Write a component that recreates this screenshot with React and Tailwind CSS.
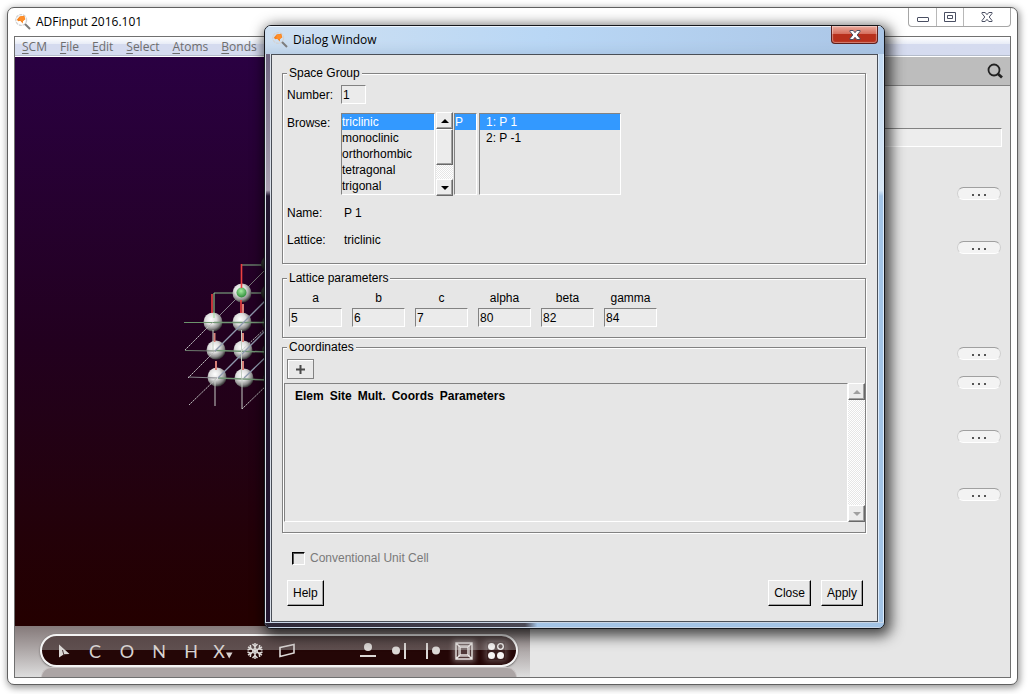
import React, { useState } from 'react';

const menus = ['SCM', 'File', 'Edit', 'Select', 'Atoms', 'Bonds'];

const systems = ['triclinic', 'monoclinic', 'orthorhombic', 'tetragonal', 'trigonal'];

const lattice = [
    { name: 'a', value: '5' },
    { name: 'b', value: '6' },
    { name: 'c', value: '7' },
    { name: 'alpha', value: '80' },
    { name: 'beta', value: '82' },
    { name: 'gamma', value: '84' },
];

const columns = ['Elem', 'Site', 'Mult.', 'Coords', 'Parameters'];

// space above each "more" button in the side panel
const moreButtons = ['mt-[40px]', 'mt-[41px]', 'mt-[93px]', 'mt-[16px]', 'mt-[41px]', 'mt-[45px]'];

const atoms = [
    [241, 293], [212, 322], [241, 322], [215, 350], [242, 350], [216, 377], [243, 378],
];

const darkAtoms = [[269, 264], [269, 293], [270, 323], [270, 351], [271, 379]];

function AppIcon() {
    return (
        <svg className="h-4 w-4 shrink-0" viewBox="0 0 16 16" fill="none">
            <circle cx="6.200" cy="6" r="5.400" stroke="#d3d3d3" strokeWidth="1.300" strokeDasharray="3 .8" />
            <path d="M10 10L15 15" stroke="#7d7d7d" strokeWidth="1.900" />
            <path d="M1.800 5.800L4.500 2.600l4.800-.8 1 3.600-2.200 1-.4 3-2.400-2.600-2 .4z" fill="#f5821f" />
            <circle cx="7" cy="4.600" r="2.600" fill="#ff8f2b" />
        </svg>
    );
}

function CrossIcon() {
    return (
        <svg className="h-3 w-3" viewBox="0 0 12 12">
            <path
                d="M1 1.500h3.200L6 3.700l1.800-2.200H11v1L8.200 6 11 9.500v1H7.800L6 8.300l-1.800 2.200H1v-1L3.800 6 1 2.500z"
                fill="#fff"
                stroke="#4a4f63"
            />
        </svg>
    );
}

function Molecule() {
    return (
        <svg className="h-[569px] w-[515px] shrink-0" viewBox="14 57 515 569" fill="none">
            <defs>
                <radialGradient id="ball" cx="40%" cy="35%" r="65%">
                    <stop offset="0" stopColor="#fff" />
                    <stop offset=".45" stopColor="#dedede" />
                    <stop offset=".8" stopColor="#8b8b8b" />
                    <stop offset="1" stopColor="#3a3a3a" />
                </radialGradient>
                <radialGradient id="darkBall" cx="45%" cy="35%" r="65%">
                    <stop offset="0" stopColor="#5a605a" />
                    <stop offset="1" stopColor="#101010" />
                </radialGradient>
                <radialGradient id="greenBall" cx="45%" cy="35%" r="65%">
                    <stop offset="0" stopColor="#a6eda0" />
                    <stop offset="1" stopColor="#2c8c38" />
                </radialGradient>
            </defs>
            <path d="M241 293L270 264" stroke="#777" />
            <path d="M212 322L241 293" stroke="#85808a" />
            <path d="M240 265H270M213 293H270" stroke="#667b68" strokeWidth="1.500" />
            {darkAtoms.map(([x, y]) => (
                <circle key={y} cx={x} cy={y} r="9" fill="url(#darkBall)" />
            ))}
            {atoms.map(([x, y]) => (
                <circle key={`${x}-${y}`} cx={x} cy={y} r="9.500" fill="url(#ball)" />
            ))}
            <circle cx="240.500" cy="292.500" r="5" fill="url(#greenBall)" />
            <path d="M183 322.500H213" stroke="#6c936c" />
            <path d="M184 350.500L215 351" stroke="#6d7a6d" />
            <path d="M187 377L216 378" stroke="#85858a" />
            <path d="M213 322.500H268M215 350.500L268 352M217 378L268 380" stroke="#719574" strokeWidth="1.500" />
            <path d="M184 350L212 322M187 378L214 351M188 405L216 378M241 409L268 383" stroke="#bdbdbd" strokeDasharray="2 .6" />
            <path d="M214 351L268 297M217 378L268 327M243 378L268 354" stroke="#8f9aae" strokeWidth="1.300" />
            <path d="M241 350L268 325" stroke="#c5c9c5" strokeDasharray="2 1" />
            <path d="M240.500 264V288M211 294V313M240 300V313" stroke="#ee4040" strokeWidth="1.600" />
            <path d="M213 293V318" stroke="#9ce09a" />
            <path d="M213.500 333V342M242 304V313M242 333V342M215 361V370M242 361V370" stroke="#d88078" strokeWidth="2" />
            <path d="M212 330V350M240.500 330V378" stroke="#c3cec3" />
            <path d="M214 378V406M241 378V409" stroke="#c5cac5" />
        </svg>
    );
}

function WinButton({ label, className, children }) {
    return (
        <button aria-label={label} className={`flex h-[18px] items-center justify-center ${className}`}>
            {children}
        </button>
    );
}

function ToolButton({ label, children }) {
    return (
        <button
            aria-label={label}
            className="flex h-full w-8 items-center justify-center font-['Lato',sans-serif] text-[18px] leading-5 text-[#d8d3d1]"
        >
            {children}
        </button>
    );
}

function Toolbar() {
    return (
        <div className="h-[51px] overflow-hidden bg-linear-to-b from-[#857a7a] to-[#dedede] pr-3 pl-[25px] pt-2">
            <div className="flex h-[33px] items-stretch rounded-full border-2 border-[#f4f4f4] bg-linear-to-b from-[#594848] from-0% via-[#5f5050] via-50% to-[#240606] to-50% pl-[5px] shadow-[0_1px_2px_rgba(0,0,0,0.5)]">
                <ToolButton label="Select tool">
                    <svg className="h-4 w-4" viewBox="0 0 16 16">
                        <path d="M4 1.500l10.500 9.500-5.500.3L4 14.500z" fill="#dcd8d6" />
                        <path d="M7.500 7l1.500 5.500" stroke="#4b3a3a" />
                    </svg>
                </ToolButton>
                <ToolButton label="Carbon">C</ToolButton>
                <ToolButton label="Oxygen">O</ToolButton>
                <ToolButton label="Nitrogen">N</ToolButton>
                <ToolButton label="Hydrogen">H</ToolButton>
                <ToolButton label="Other element">
                    <span>X</span>
                    <svg className="mt-2 h-2 w-2" viewBox="0 0 8 8">
                        <path d="M1 1.500h6.500L4.200 7.500z" fill="#d8d3d1" />
                    </svg>
                </ToolButton>
                <ToolButton label="Structure tool">
                    <svg className="h-[18px] w-[18px]" viewBox="0 0 18 18" fill="none" stroke="#dcd8d6" strokeWidth="1.500">
                        <path d="M9 1v16M2 5l14 8M16 5L2 13" />
                        <path d="M6.500 2L9 4.500 11.500 2M6.500 16L9 13.500l2.500 2.500M1.500 8l3.300-1.300L4.300 3M16.500 8l-3.300-1.300.5-3.700M1.500 10l3.300 1.300-.5 3.700M16.500 10l-3.300 1.300.5 3.700" />
                        <circle cx="9" cy="9" r="2.500" strokeWidth="1" />
                    </svg>
                </ToolButton>
                <ToolButton label="Plane">
                    <svg className="h-[18px] w-[18px]" viewBox="0 0 18 18" fill="none" stroke="#dcd8d6" strokeWidth="1.600">
                        <path d="M2 5.500l14-3v8.500L2 14.500z" />
                    </svg>
                </ToolButton>
                <div className="ml-auto flex pr-1">
                    <ToolButton label="Align horizontal">
                        <svg className="h-[18px] w-[18px]" viewBox="0 0 18 18" fill="#dcd8d6">
                            <circle cx="9" cy="5" r="4" />
                            <path d="M1 13h16v2H1z" />
                        </svg>
                    </ToolButton>
                    <ToolButton label="Align left">
                        <svg className="h-[18px] w-[18px]" viewBox="0 0 18 18" fill="#dcd8d6">
                            <circle cx="5" cy="8.500" r="4" />
                            <path d="M13 1h2v16h-2z" />
                        </svg>
                    </ToolButton>
                    <ToolButton label="Align right">
                        <svg className="h-[18px] w-[18px]" viewBox="0 0 18 18" fill="#dcd8d6">
                            <circle cx="13" cy="8.500" r="4" />
                            <path d="M3 1h2v16H3z" />
                        </svg>
                    </ToolButton>
                    <ToolButton label="Show cell">
                        <svg
                            className="h-[18px] w-[18px] bg-white/20 shadow-[0_0_5px_2px_rgba(255,255,255,0.35)]"
                            viewBox="0 0 18 18"
                            fill="none"
                            stroke="#ece8e6"
                        >
                            <path d="M1 1h16v16H1zM5 5h8v8H5zM1 1l4 4M17 1l-4 4M1 17l4-4M17 17l-4-4" strokeWidth="1.400" />
                            <path d="M3.500 3.500h11v11h-11z" strokeWidth=".6" />
                        </svg>
                    </ToolButton>
                    <ToolButton label="Show atoms">
                        <svg
                            className="h-[18px] w-[18px] overflow-visible bg-white/10 shadow-[0_0_6px_2px_rgba(255,255,255,0.25)]"
                            viewBox="0 0 18 18"
                            fill="#f6f4f3"
                        >
                            <circle cx="4.500" cy="4.500" r="3.500" />
                            <circle cx="13.500" cy="4.500" r="2.800" fill="none" stroke="#f6f4f3" strokeWidth="1.300" />
                            <circle cx="4.500" cy="13.500" r="3.500" />
                            <circle cx="13.500" cy="13.500" r="3.500" />
                        </svg>
                    </ToolButton>
                </div>
            </div>
            <div className="mx-px h-[10px] rounded-t-[10px] border border-b-0 border-[#c9c4c4] bg-[#aca5a5]"></div>
        </div>
    );
}

function ScrollArrow({ label, up, disabled }) {
    return (
        <button
            aria-label={label}
            className="flex h-[17px] w-[17px] shrink-0 items-center justify-center border border-t-white border-l-white border-r-[#696969] border-b-[#696969] bg-[#ececec] shadow-[inset_-1px_-1px_0_#a0a0a0]"
        >
            <svg className="h-2 w-2" viewBox="0 0 8 8" fill={disabled ? '#a0a0a0' : '#000'}>
                {up ? <path d="M0 6h8L4 2z" /> : <path d="M0 2h8L4 6z" />}
            </svg>
        </button>
    );
}

function ListBox({ label, items, selected, onSelect, className }) {
    return (
        <ul
            role="listbox"
            aria-label={label}
            className={`h-[82px] overflow-hidden border border-t-[#828282] border-l-[#828282] border-r-white border-b-white ${className}`}
        >
            {items.map((item) => (
                <li
                    key={item}
                    role="option"
                    aria-selected={item === selected}
                    onClick={() => onSelect(item)}
                    className={item === selected ? 'bg-[#3399ff] text-white' : ''}
                >
                    {item}
                </li>
            ))}
        </ul>
    );
}

function Group({ title, className, children }) {
    return (
        <fieldset
            className={`border border-[#828282] shadow-[1px_1px_0_#fff,inset_1px_1px_0_#fff] ${className}`}
        >
            <legend className="ml-1 bg-[#e6e6e6] px-[2px]">{title}</legend>
            {children}
        </fieldset>
    );
}

function PushButton({ children, onClick }) {
    return (
        <button
            onClick={onClick}
            className="h-[26px] border border-t-white border-l-white border-r-black border-b-black bg-[#e9e9e9] px-[5px] shadow-[inset_-1px_-1px_0_#a0a0a0]"
        >
            {children}
        </button>
    );
}

const fieldStyle =
    'h-[19px] border border-t-[#828282] border-l-[#828282] border-r-white border-b-white bg-[#ebebeb] px-px outline-none';

function SpaceGroupDialog({ onClose }) {
    const [system, setSystem] = useState('triclinic');
    const [centering, setCentering] = useState('P');
    const [group, setGroup] = useState('1: P 1');

    return (
        <div
            role="dialog"
            aria-label="Dialog Window"
            className="absolute top-[25px] left-[264px] w-[621px] overflow-hidden rounded-[7px] border border-[#15171c] bg-[#b1cae6] shadow-[3px_4px_14px_3px_rgba(0,0,0,0.7)]"
        >
            <div className="flex h-7 items-center bg-linear-to-r from-[#cfe0f1] via-[#b9d7f5] via-45% to-[#abc6e6] pl-[7px] shadow-[inset_0_1px_0_#eef6ff,inset_0_-10px_8px_-6px_rgba(160,185,215,0.5)]">
                <AppIcon />
                <h2 className="ml-[5px] font-['Open_Sans',sans-serif] text-[12px]">Dialog Window</h2>
                <WinButton
                    label="Close dialog"
                    className="mr-[6px] ml-auto w-[47px] self-start rounded-b-[4px] border border-t-0 border-[#5d1f1c] bg-linear-to-b from-[#e9a99c] from-0% via-[#d6705f] via-45% to-[#b8301c] to-50% shadow-[inset_0_0_1px_1px_rgba(255,255,255,0.4)]"
                >
                    <CrossIcon />
                </WinButton>
            </div>

            <div className="flex items-stretch">
                <div className="w-[6px] border-x border-[#d9dfe8] bg-linear-to-b from-[#6f6580] from-0% via-[#a9a0b0] via-24% to-[#231630] to-25%"></div>

                <div className="min-w-0 flex-1 border border-[#4a4f57] bg-[#e6e6e6] pt-[10px] pr-[11px] pb-[15px] pl-[10px]">
                    <Group title="Space Group" className="pb-[15px]">
                        <div className="flex items-center px-1 pt-1">
                            <label htmlFor="number" className="w-[54px]">Number:</label>
                            <input id="number" defaultValue="1" className={`w-[25px] ${fieldStyle}`} />
                        </div>
                        <div className="mt-2 flex items-center px-1">
                            <span className="w-[54px] self-start pt-[3px]">Browse:</span>
                            <ListBox
                                label="Crystal system"
                                items={systems}
                                selected={system}
                                onSelect={setSystem}
                                className="w-[94px]"
                            />
                            <div className="ml-px flex h-[84px] w-[17px] flex-col bg-[repeating-conic-gradient(#fff_0_25%,#e6e6e6_0_50%)] bg-size-[2px_2px]">
                                <ScrollArrow label="Scroll systems up" up />
                                <div className="h-9 border border-t-white border-l-white border-r-[#696969] border-b-[#696969] bg-[#ececec] shadow-[inset_-1px_-1px_0_#a0a0a0]"></div>
                                <div className="flex-1"></div>
                                <ScrollArrow label="Scroll systems down" />
                            </div>
                            <ListBox
                                label="Centering"
                                items={['P']}
                                selected={centering}
                                onSelect={setCentering}
                                className="ml-px w-[23px]"
                            />
                            <ListBox
                                label="Space groups"
                                items={['1: P 1', '2: P -1']}
                                selected={group}
                                onSelect={setGroup}
                                className="ml-[2px] w-[142px] [&>li]:pl-[6px]"
                            />
                        </div>
                        <dl className="mt-[9px] grid grid-cols-[57px_1fr] gap-y-[11px] px-1">
                            <dt>Name:</dt>
                            <dd>P 1</dd>
                            <dt>Lattice:</dt>
                            <dd>triclinic</dd>
                        </dl>
                    </Group>

                    <Group title="Lattice parameters" className="mt-[6px] pb-[10px]">
                        <div className="flex gap-[10px] px-[6px] pt-1">
                            {lattice.map((p) => (
                                <label key={p.name} className="flex w-[53px] flex-col gap-[2px] text-center">
                                    {p.name}
                                    <input defaultValue={p.value} className={`w-full ${fieldStyle}`} />
                                </label>
                            ))}
                        </div>
                    </Group>

                    <Group title="Coordinates" className="mt-px pb-[10px]">
                        <div className="px-1 pt-1">
                            <button
                                aria-label="Add atom"
                                className="flex h-5 w-[27px] items-center justify-center border border-[#828282] bg-[#e9e9e9] shadow-[inset_1px_1px_0_#fff]"
                            >
                                <svg className="h-[9px] w-[9px]" viewBox="0 0 9 9" fill="#4a4a4a">
                                    <path d="M3.500 0h2v3.500H9v2H5.500V9h-2V5.500H0v-2h3.500z" />
                                </svg>
                            </button>
                        </div>
                        <div className="mt-1 flex h-[139px] pl-px">
                            <div className="flex-1 border border-t-[#828282] border-l-[#828282] border-r-white border-b-white pt-1 pl-[10px]">
                                <table>
                                    <thead>
                                        <tr>
                                            {columns.map((c) => (
                                                <th key={c} scope="col" className="pr-[6px] text-left font-bold">{c}</th>
                                            ))}
                                        </tr>
                                    </thead>
                                </table>
                            </div>
                            <div className="flex w-[17px] flex-col justify-between bg-[repeating-conic-gradient(#fff_0_25%,#e6e6e6_0_50%)] bg-size-[2px_2px]">
                                <ScrollArrow label="Scroll coordinates up" up disabled />
                                <ScrollArrow label="Scroll coordinates down" disabled />
                            </div>
                        </div>
                    </Group>

                    <div className="mt-[17px] flex items-center gap-[5px] pl-[10px]">
                        <input
                            id="conventional"
                            type="checkbox"
                            disabled
                            className="h-[13px] w-[13px] appearance-none border border-t-black border-l-black border-r-white border-b-white bg-[#e6e6e6] shadow-[inset_1px_1px_0_#555]"
                        />
                        <label htmlFor="conventional" className="text-[#7a7a7a]">Conventional Unit Cell</label>
                    </div>

                    <div className="mt-[14px] flex gap-[10px] pr-[3px] pl-[5px]">
                        <PushButton>Help</PushButton>
                        <div className="flex-1"></div>
                        <PushButton onClick={onClose}>Close</PushButton>
                        <PushButton>Apply</PushButton>
                    </div>
                </div>

                <div className="w-[6px] border-x border-[#dcebfa] bg-linear-to-b from-[#c3daf2] from-0% via-[#d9e8f5] via-24% to-[#a3c4e6] to-25%"></div>
            </div>
            <div className="h-[6px] border-y border-[#c9d6e6] bg-linear-to-r from-[#2c2636] from-0% via-[#4a4854] via-42% to-[#a3c4e6] to-44%"></div>
        </div>
    );
}

function App() {
    const [open, setOpen] = useState(true);

    return (
        <div className="relative flex min-h-screen bg-white pt-[7px] pr-[10px] pb-[9px] pl-[7px] font-['Liberation_Sans',Arial,sans-serif] text-[12px] leading-4 text-black">
            <div className="flex flex-1 flex-col rounded-[7px] border border-[#606060] bg-white shadow-[1px_2px_7px_1px_rgba(0,0,0,0.4)]">
                <header className="flex h-7 items-center pl-[7px]">
                    <AppIcon />
                    <h1 className="ml-[5px] font-['Open_Sans',sans-serif] text-[12px]">ADFinput 2016.101</h1>
                    <div className="mr-[6px] ml-auto flex self-start rounded-b-[4px] border border-t-0 border-[#a6a6a6]">
                        <WinButton label="Minimize" className="w-7 border-r border-[#b8b8b8]">
                            <span className="mt-1 h-[5px] w-3 rounded-[1px] border border-[#4a4f63]"></span>
                        </WinButton>
                        <WinButton label="Maximize" className="w-[27px] border-r border-[#b8b8b8]">
                            <svg className="h-[10px] w-3" viewBox="0 0 12 10" fill="none" stroke="#4a4f63">
                                <path d="M.5.5h11v9H.5zM3.500 3.500h5v3h-5z" />
                            </svg>
                        </WinButton>
                        <WinButton label="Close" className="w-[46px]">
                            <CrossIcon />
                        </WinButton>
                    </div>
                </header>

                <div className="mx-[6px] mb-[6px] flex flex-1 flex-col border border-[#707070]">
                    <nav className="flex h-5 items-center gap-[13px] border-b border-white bg-linear-to-b from-white from-0% via-[#e9edf7] via-35% to-[#d5dbef] to-36% pl-[7px] font-['Open_Sans',sans-serif] text-[#6d6d6d] shadow-[inset_0_-1px_0_#b4bccb]">
                        {menus.map((m) => (
                            <button key={m}>
                                <span className="underline underline-offset-2">{m[0]}</span>
                                {m.slice(1)}
                            </button>
                        ))}
                    </nav>

                    <div className="flex flex-1 items-stretch">
                        <main className="flex w-[515px] flex-col">
                            <div className="flex flex-1 overflow-hidden bg-linear-to-b from-[#2a0042] via-[#22001f] to-[#240000]">
                                <Molecule />
                            </div>
                            <Toolbar />
                        </main>

                        <aside className="flex flex-1 flex-col bg-[#e6e6e6]">
                            <div className="flex h-[29px] items-center justify-end border-b border-[#828282] bg-[#bdbdbd] pr-[7px]">
                                <button aria-label="Search">
                                    <svg className="h-4 w-4" viewBox="0 0 16 16" fill="none" stroke="#222">
                                        <circle cx="7" cy="7" r="5.500" strokeWidth="1.800" />
                                        <path d="M10.500 10.500L15 14.500" strokeWidth="2.800" />
                                    </svg>
                                </button>
                            </div>
                            <div className="flex flex-col items-end pt-[42px] pr-2 pl-2">
                                <input
                                    aria-label="Task"
                                    className="h-[19px] w-full border border-t-[#828282] border-l-[#828282] border-r-white border-b-white bg-[#ededed] outline-none"
                                />
                                {moreButtons.map((space, i) => (
                                    <button
                                        key={i}
                                        aria-label="More options"
                                        className={`mr-px flex h-[13px] w-11 shrink-0 items-center justify-center gap-1 rounded-full border border-x-[#cfcfcf] border-t-[#a0a0a0] border-b-white bg-[#f3f3f3] pt-[2px] ${space}`}
                                    >
                                        <span className="h-[2px] w-[2px] bg-[#555]"></span>
                                        <span className="h-[2px] w-[2px] bg-[#555]"></span>
                                        <span className="h-[2px] w-[2px] bg-[#555]"></span>
                                    </button>
                                ))}
                            </div>
                        </aside>
                    </div>
                </div>
            </div>

            {open && <SpaceGroupDialog onClose={() => setOpen(false)} />}
        </div>
    );
}

export default App;
